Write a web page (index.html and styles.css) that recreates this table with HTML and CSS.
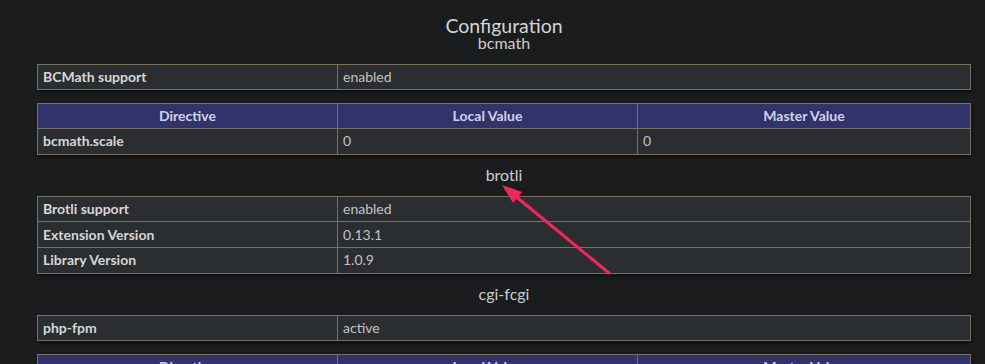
FILE: index.html
```html
<!DOCTYPE html>
<html lang="en">
<head>
    <meta charset="UTF-8">
    <meta name="viewport" content="width=device-width, initial-scale=1.0">
    <title>phpinfo()</title>
    <link rel="stylesheet" href="styles.css">
</head>
<body>
    <div class="center">
        <h1>Configuration</h1>

        <h2>bcmath</h2>
        <table>
            <tr><td class="e">BCMath support</td><td class="v">enabled</td></tr>
        </table>
        <table class="three">
            <tr class="h"><th>Directive</th><th>Local Value</th><th>Master Value</th></tr>
            <tr><td class="e">bcmath.scale</td><td class="v">0</td><td class="v">0</td></tr>
        </table>

        <h2>brotli</h2>
        <table>
            <tr><td class="e">Brotli support</td><td class="v">enabled</td></tr>
            <tr><td class="e">Extension Version</td><td class="v">0.13.1</td></tr>
            <tr><td class="e">Library Version</td><td class="v">1.0.9</td></tr>
        </table>

        <h2>cgi-fcgi</h2>
        <table>
            <tr><td class="e">php-fpm</td><td class="v">active</td></tr>
        </table>
        <table class="three">
            <tr class="h"><th>Directive</th><th>Local Value</th><th>Master Value</th></tr>
            <tr><td class="e">cgi.discard_path</td><td class="v">0</td><td class="v">0</td></tr>
        </table>
    </div>

    <!-- annotation arrow pointing at the brotli heading -->
    <svg class="arrow" width="985" height="364" viewBox="0 0 985 364">
        <line x1="609" y1="273" x2="514" y2="195" stroke="#f5255c" stroke-width="3" stroke-linecap="round"/>
        <polygon points="502,185 522,192 513,203" fill="#f5255c"/>
    </svg>
</body>
</html>
```

FILE: styles.css
```css
body {
    margin: 0;
    background: #1b1c1e;
    color: #cfcfcf;
    font-family: Lato, 'Noto Sans', sans-serif;
    position: relative;
    overflow: hidden;
    height: 364px;
}
.center {
    width: 934px;
    margin-left: 37px;
    padding-top: 16px;
    text-align: center;
}
h1 {
    margin: 0;
    font-size: 19.5px;
    line-height: 19px;
    font-weight: normal;
    color: #d4d4d4;
}
h2 {
    margin: 0;
    font-size: 16px;
    line-height: 16px;
    font-weight: normal;
    color: #cccccc;
}
table {
    border-collapse: collapse;
    width: 934px;
    margin: 12.5px 0;
    text-align: left;
    box-shadow: 1px 2px 3px #0d0e0f;
}
td, th {
    border: 1px solid #7b7264;
    background: #2b2e30;
    font-size: 14px;
    line-height: 16px;
    height: 25.6px;
    box-sizing: border-box;
    padding: 4px 5px;
}
.e {
    width: 300px;
    font-weight: bold;
    color: #d6d6d6;
}
.v {
    color: #c2c2c2;
}
.three td, .three th {
    width: 300px;
}
.three td:last-child, .three th:last-child {
    width: auto;
}
.h th {
    background: #32336b;
    color: #d0d1ea;
    text-align: center;
    font-weight: bold;
}
.arrow {
    position: absolute;
    top: 0;
    left: 0;
    pointer-events: none;
}
```
